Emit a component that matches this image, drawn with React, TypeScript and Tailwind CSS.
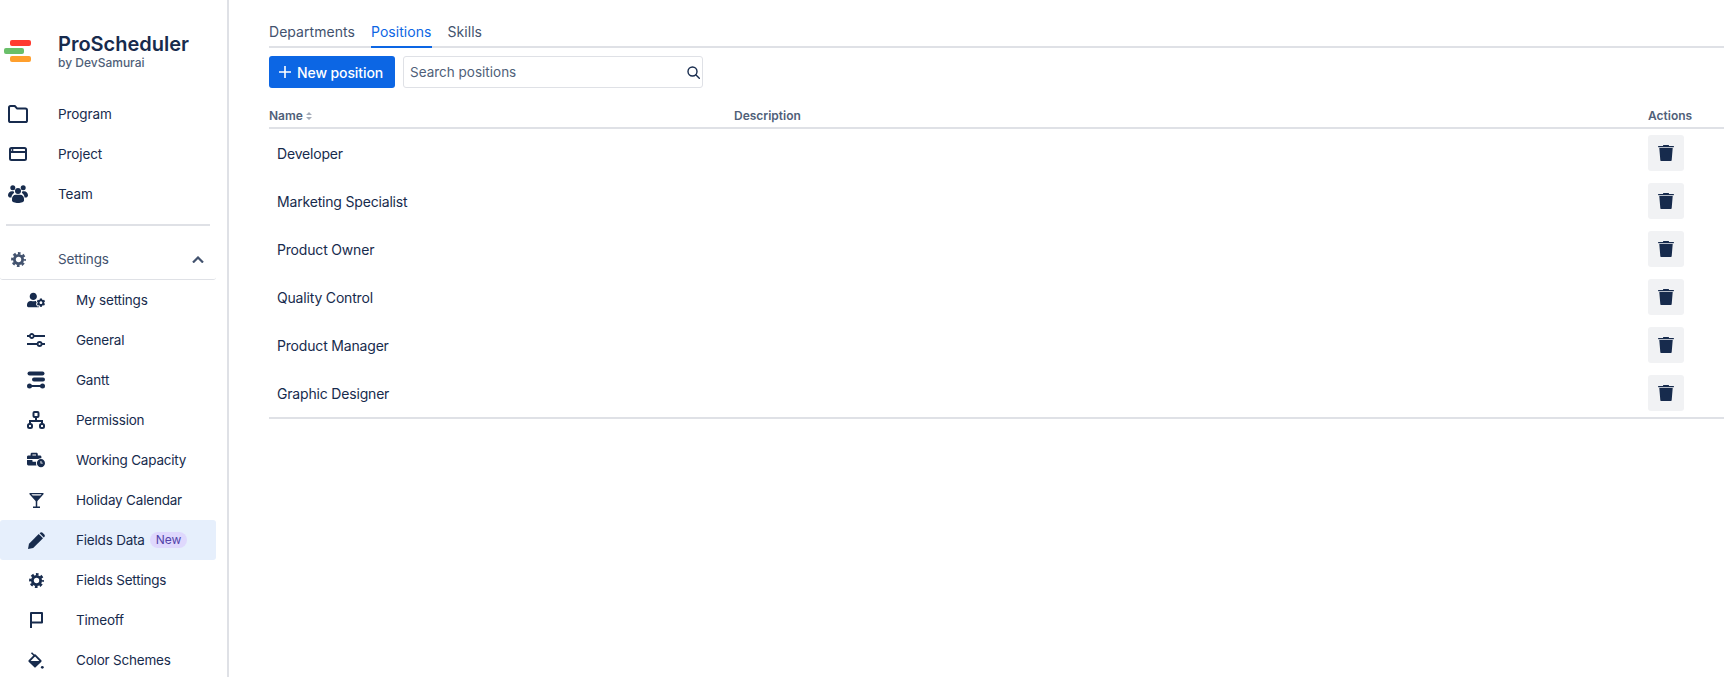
import { FaBusinessTime, FaUserCog } from "react-icons/fa";
import { ReactNode } from "react";

const ink = "#172b4d";

function FolderIcon() {
  return (
    <svg width="20" height="18" viewBox="0 0 20 18" fill="none" stroke={ink} strokeWidth="2" strokeLinejoin="round">
      <path d="M1 2.600C1 1.700 1.700 1 2.600 1h4.200l2.400 2.600h8.200c.9 0 1.600.7 1.600 1.600v10.200c0 .9-.7 1.600-1.600 1.600H2.600C1.700 17 1 16.300 1 15.400z" />
    </svg>
  );
}

function WindowIcon() {
  return (
    <svg width="18" height="14" viewBox="0 0 18 14" fill="none" stroke={ink} strokeWidth="2">
      <rect x="1" y="1" width="16" height="12" rx="1.500" />
      <path d="M1 5h16" />
      <circle cx="3.500" cy="3" r="1" fill={ink} strokeWidth="0" />
    </svg>
  );
}

function TeamIcon() {
  return (
    <svg width="20" height="18" viewBox="0 0 20 18" fill={ink}>
      <circle cx="4.800" cy="2.800" r="2.500" />
      <circle cx="15.200" cy="2.800" r="2.500" />
      <circle cx="10" cy="6" r="3" />
      <path d="M3.900 6.200C1.700 6.200 0 8 0 10.200c0 1 .6 1.900 1.700 2.300h1.700c.2-2 1.200-3.700 2.800-4.800-.3-.5-.5-1-.6-1.500z" />
      <path d="M16.100 6.200c2.200 0 3.900 1.800 3.900 4 0 1-.6 1.900-1.700 2.300h-1.700c-.2-2-1.200-3.700-2.800-4.800.3-.5.5-1 .6-1.500z" />
      <path d="M7.800 9.800h4.400c2.200 0 3.800 1.800 3.800 4v1.700c0 1.400-2.700 2.500-6 2.500s-6-1.100-6-2.500v-1.700c0-2.200 1.600-4 3.800-4z" />
    </svg>
  );
}

function GearIcon({ color = ink }: { color?: string }) {
  return (
    <svg width="15" height="15" viewBox="0 0 16 16" fill="none" stroke={color}>
      <circle cx="8" cy="8" r="4.400" strokeWidth="3" />
      <circle cx="8" cy="8" r="6.700" strokeWidth="2.400" strokeDasharray="2.900 2.360" strokeDashoffset="1.450" />
    </svg>
  );
}

function SlidersIcon() {
  return (
    <svg width="18" height="14" viewBox="0 0 18 14" fill="none" stroke={ink} strokeWidth="1.800">
      <path d="M0 3h2.500M7 3h11M0 11h10M15 11h3" />
      <circle cx="4.800" cy="3" r="2" />
      <circle cx="12.600" cy="11" r="2" />
    </svg>
  );
}

function GanttIcon() {
  return (
    <svg width="18" height="18" viewBox="0 0 18 18" fill={ink}>
      <rect x="0.500" y="0.500" width="17" height="4" rx="2" />
      <rect x="5" y="6.500" width="13" height="4" rx="2" />
      <circle cx="2.500" cy="15" r="2.500" />
      <circle cx="15.500" cy="15" r="2.500" />
      <rect x="2" y="14" width="14" height="2" />
    </svg>
  );
}

function NetworkIcon() {
  return (
    <svg width="18" height="18" viewBox="0 0 18 18" fill="none" stroke={ink} strokeWidth="2">
      <rect x="6.500" y="1" width="5" height="5" rx="1" />
      <rect x="1" y="13" width="4" height="4" rx="1.500" />
      <rect x="13" y="13" width="4" height="4" rx="1.500" />
      <path d="M9 6v4M3 13v-3h12v3" />
    </svg>
  );
}

function MartiniIcon() {
  return (
    <svg width="15" height="15" viewBox="0 0 15 15" fill="none">
      <path d="M1 .7h13L7.500 8z" stroke={ink} strokeWidth="1.300" strokeLinejoin="round" />
      <path d="M3 2.600h9L7.500 8z" fill={ink} />
      <path d="M7.500 8v6M4 14.200h7" stroke={ink} strokeWidth="1.500" />
    </svg>
  );
}

function FlagIcon() {
  return (
    <svg width="13" height="16" viewBox="0 0 13 16" fill="none" stroke={ink} strokeWidth="2" strokeLinejoin="round">
      <path d="M1 16V1h11v9.500H1" />
    </svg>
  );
}

function PencilIcon() {
  return (
    <svg width="17" height="17" viewBox="0 0 17 17" fill={ink}>
      <path d="M0 17l1-5.200L10.700 2l4.300 4.300-9.800 9.700z" />
      <path d="M11.600 1.200l.5-.5c.7-.7 1.800-.7 2.500 0l1.700 1.700c.7.7.7 1.800 0 2.500l-.5.500z" />
    </svg>
  );
}

function BucketIcon() {
  return (
    <svg width="16" height="17" viewBox="0 0 16 17" fill="none">
      <path d="M7 3.200L12.700 9 7 14.700 1.300 9z" stroke={ink} strokeWidth="1.800" strokeLinejoin="round" />
      <path d="M1.300 9h11.400L7 14.700z" fill={ink} />
      <path d="M3.500 0.800L7 4.300" stroke={ink} strokeWidth="1.600" />
      <circle cx="14.300" cy="15.300" r="1.400" fill={ink} />
    </svg>
  );
}

function TrashIcon() {
  return (
    <svg width="16" height="16" viewBox="0 0 16 16" fill={ink}>
      <path d="M5 .5C5 .2 5.200 0 5.500 0h5c.3 0 .5.200.5.500V1h4.500c.3 0 .5.300.5.600 0 .4-.2.600-.5.600H.5C.2 2.200 0 2 0 1.600 0 1.300.2 1 .5 1H5z" />
      <path d="M1.300 3h13.400l-1 12c0 .6-.5 1-1 1H3.300c-.5 0-1-.4-1-1z" />
    </svg>
  );
}

function SearchIcon() {
  return (
    <svg width="13" height="13" viewBox="0 0 13 13" fill="none" stroke={ink} strokeWidth="1.400">
      <circle cx="5.500" cy="5.500" r="4.500" />
      <path d="M9 9l3.300 3.300" strokeLinecap="round" />
    </svg>
  );
}

function NavRow({ icon, label }: { icon: ReactNode; label: string }) {
  return (
    <div className="flex h-10 items-center">
      <div className="flex w-[36px] justify-center">{icon}</div>
      <span className="ml-[22px] text-[13.5px] tracking-[-0.1px] text-[#172b4d]">{label}</span>
    </div>
  );
}

function SubRow({ icon, label, active, badge }: { icon: ReactNode; label: string; active?: boolean; badge?: string }) {
  return (
    <div className={`flex h-10 w-[216px] items-center rounded-[3px] ${active ? "bg-[#e6effc]" : ""}`}>
      <div className="flex w-[72px] justify-center">{icon}</div>
      <span className="ml-[4px] text-[13.5px] tracking-[-0.2px] text-[#172b4d]">{label}</span>
      {badge && (
        <span className="ml-[5px] rounded-full bg-[#dfd8fd] px-[6px] text-[12px] leading-[16px] text-[#5243aa]">{badge}</span>
      )}
    </div>
  );
}

const positions = [
  "Developer",
  "Marketing Specialist",
  "Product Owner",
  "Quality Control",
  "Product Manager",
  "Graphic Designer",
];

export default function App() {
  return (
    <div className="flex h-[677px] w-[1724px] overflow-hidden bg-white font-['Inter',sans-serif] text-[#172b4d]">
      <aside className="h-full w-[229px] shrink-0 border-r-2 border-[#dfe1e6]">
        <div className="flex h-[94px] items-start pt-[32px]">
          <div className="flex w-[36px] flex-col items-start gap-[2px] pt-[8px] pl-[4px]">
            <div className="ml-[6px] h-[6px] w-[21px] rounded-[2px] bg-[#ff3b30]" />
            <div className="h-[6px] w-[20px] rounded-[2px] bg-[#6abf69]" />
            <div className="ml-[6px] h-[6px] w-[21px] rounded-[2px] bg-[#ff9f2d]" />
          </div>
          <div className="ml-[22px]">
            <div className="text-[20px] leading-[24px] font-semibold">ProScheduler</div>
            <div className="-mt-[1px] text-[12px] leading-[16px] font-medium text-[#505f79]">by DevSamurai</div>
          </div>
        </div>
        <NavRow icon={<FolderIcon />} label="Program" />
        <NavRow icon={<WindowIcon />} label="Project" />
        <NavRow icon={<TeamIcon />} label="Team" />
        <div className="mt-[10px] ml-[6px] h-[2px] w-[204px] bg-[#dfe1e6]" />
        <div className="mt-[14px] flex h-10 w-[216px] items-center rounded-b-[3px] border-b border-[#dfe1e6]">
          <div className="flex w-[36px] justify-center">
            <GearIcon color="#42526e" />
          </div>
          <span className="ml-[22px] text-[13.5px] tracking-[-0.1px] text-[#42526e]">Settings</span>
          <svg className="mr-[12px] ml-auto" width="12" height="7" viewBox="0 0 12 7" fill="none" stroke="#42526e" strokeWidth="2.200">
            <path d="M1 6.500l5-5 5 5" />
          </svg>
        </div>
        <SubRow icon={<FaUserCog size={18} color={ink} />} label="My settings" />
        <SubRow icon={<SlidersIcon />} label="General" />
        <SubRow icon={<GanttIcon />} label="Gantt" />
        <SubRow icon={<NetworkIcon />} label="Permission" />
        <SubRow icon={<FaBusinessTime size={18} color={ink} />} label="Working Capacity" />
        <SubRow icon={<MartiniIcon />} label="Holiday Calendar" />
        <SubRow icon={<PencilIcon />} label="Fields Data" active badge="New" />
        <SubRow icon={<GearIcon />} label="Fields Settings" />
        <SubRow icon={<FlagIcon />} label="Timeoff" />
        <SubRow icon={<BucketIcon />} label="Color Schemes" />
      </aside>

      <main className="min-w-0 flex-1 pt-[20px] pl-[40px]">
        <div className="flex h-[28px] gap-[16px] border-b-2 border-[#dfe1e6] text-[14px] leading-[24px] tracking-[0.05px]">
          <div className="text-[#42526e]">Departments</div>
          <div className="h-[28px] border-b-2 border-[#0c66e4] text-[#0c66e4]">Positions</div>
          <div className="text-[#42526e]">Skills</div>
        </div>

        <div className="mt-[8px] flex items-center gap-[8px]">
          <button className="flex h-[32px] w-[126px] items-center gap-[6px] rounded-[3px] bg-[#0c66e4] pl-[10px] text-[14px] tracking-[-0.1px] font-medium text-white">
            <svg width="12" height="12" viewBox="0 0 12 12" stroke="#fff" strokeWidth="1.600">
              <path d="M6 0v12M0 6h12" />
            </svg>
            New position
          </button>
          <div className="flex h-[32px] w-[300px] items-center justify-between rounded-[3px] border border-[#dfe1e6] pr-[2px] pl-[6px] text-[13.5px] text-[#505f79]">
            Search positions
            <SearchIcon />
          </div>
        </div>

        <div className="mt-[16px] flex h-[25px] items-center border-b-2 border-[#dfe1e6] text-[12px] font-semibold text-[#505f79]">
          <div className="flex w-[465px] items-center gap-[3px]">
            Name
            <svg width="6" height="8" viewBox="0 0 6 8" fill="#a5adba">
              <path d="M3 0l3 3H0zM3 8L0 5h6z" />
            </svg>
          </div>
          <div className="flex-1">Description</div>
          <div className="w-[76px]">Actions</div>
        </div>

        <div className="border-b-2 border-[#dfe1e6]">
          {positions.map((name) => (
            <div key={name} className="flex h-[48px] items-center">
              <div className="flex-1 pl-[8px] text-[14px] tracking-[-0.18px]">{name}</div>
              <div className="w-[76px]">
                <button className="flex h-[36px] w-[36px] items-center justify-center rounded-[3px] bg-[#f1f2f4]">
                  <TrashIcon />
                </button>
              </div>
            </div>
          ))}
        </div>
      </main>
    </div>
  );
}
